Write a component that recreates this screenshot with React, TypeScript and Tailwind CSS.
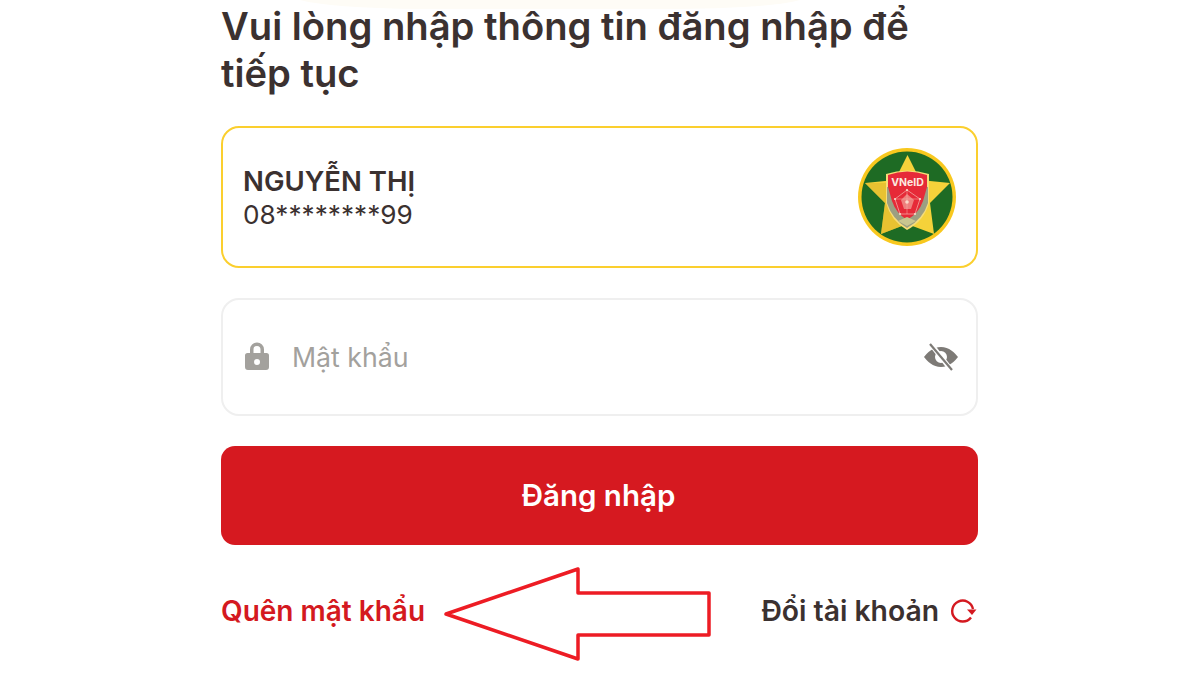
import React from "react";

const Emblem = () => (
  <svg width="100" height="100" viewBox="0 0 100 100" className="shrink-0">
    <circle cx="50" cy="50" r="49" fill="#f8c81e" />
    <circle cx="50" cy="50" r="45.500" fill="#1e6b24" />
    <path d="M50.500 8 L63 33 L93 36 L73 56 L77 87 L50 77 L24 87 L28 56 L8 36 L38 33 Z" fill="#f5d23a" />
    <path d="M8 36 L28 56 L24 87 L50 77 L50 60 L30 36 Z" fill="#dcb52a" opacity="0.55" />
    <path d="M29 27 Q50 20 72 27 L72 56 Q67 74 50 83 Q34 74 29 56 Z" fill="#f7dd78" />
    <path d="M30 40 L71 40 L71 56 Q66 72 50 81 Q35 72 30 56 Z" fill="#9c9f82" />
    <path d="M31 28 Q50 21 70 28 L70 40 L66 54 Q62 66 50 73 Q39 66 35 54 L31 40 Z" fill="#e62a38" />
    <path d="M50 43 L63 52 L58 67 L43 67 L38 52 Z" fill="none" stroke="#f5b5ad" strokeWidth="0.700" />
    <path d="M50 47 L57 53 L54 62 L47 62 L44 53 Z" fill="#ee7f7c" />
    <path d="M50 43 L50 67 M38 52 L63 52" stroke="#f5b5ad" strokeWidth="0.500" />
    <circle cx="50" cy="55" r="1.800" fill="#fbd9c8" />
    <circle cx="38" cy="52" r="1.100" fill="#fbd9c8" />
    <circle cx="63" cy="52" r="1.100" fill="#fbd9c8" />
    <circle cx="50" cy="43" r="1.100" fill="#fbd9c8" />
    <circle cx="43" cy="67" r="1.100" fill="#fbd9c8" />
    <circle cx="58" cy="67" r="1.100" fill="#fbd9c8" />
    <path d="M41 74 L50 70 L59 74 L50 79 Z" fill="#c9c690" />
    <text x="50.500" y="39" textAnchor="middle" fontSize="10.500" fontWeight="700" fill="#fbe9e0" fontFamily="Inter, sans-serif">VNeID</text>
  </svg>
);

const Lock = () => (
  <svg width="28" height="32" viewBox="0 0 28 32" className="shrink-0">
    <path
      fillRule="evenodd"
      fill="#a3a19d"
      d="M7 12V8.500a7 7 0 0 1 14 0V12h2A2.500 2.500 0 0 1 26 14.500V26a3 3 0 0 1-3 3H5a3 3 0 0 1-3-3V14.500A2.500 2.500 0 0 1 4.500 12H7Zm3.500 0h7V8.500a3.500 3.500 0 0 0-7 0V12Zm3.500 6a3 3 0 1 0 0 6 3 3 0 0 0 0-6Z"
    />
  </svg>
);

const EyeOff = () => (
  <svg width="36" height="28" viewBox="0 0 36 28" className="shrink-0">
    <path
      fillRule="evenodd"
      fill="#7d7a76"
      d="M18 4C10 4 4 10 1 14c3 4 9 10 17 10s14-6 17-10c-3-4-9-10-17-10Zm0 4a6 6 0 1 1 0 12 6 6 0 0 1 0-12Z"
    />
    <path d="M7 0 L29 28" stroke="#ffffff" strokeWidth="5" />
    <path d="M7 1 L29 27" stroke="#7d7a76" strokeWidth="2.200" />
  </svg>
);

const Refresh = () => (
  <svg width="28" height="28" viewBox="0 0 28 28" className="shrink-0">
    <path d="M24 12 A10.500 10.500 0 1 0 22 20.500" fill="none" stroke="#d41920" strokeWidth="2.400" />
    <path d="M18 12.500 L27.500 12.500 L23 18 Z" fill="#d41920" />
  </svg>
);

export default function App() {
  return (
    <div className="relative h-[675px] w-[1200px] overflow-hidden bg-white font-['Inter',sans-serif]">
      {/* faint watermark behind the title */}
      <svg width="500" height="12" viewBox="0 0 500 12" className="absolute top-0 left-[300px]">
        <path d="M0 0 L500 0 Q470 8 380 9 L120 9 Q30 8 0 0 Z" fill="#fefcf6" />
      </svg>

      <div className="relative flex flex-col pt-[3px] pr-[222px] pl-[221px]">
        <h1 className="text-[38.200px] leading-[47px] font-semibold text-[#3b3130]">
          Vui lòng nhập thông tin đăng nhập để tiếp tục
        </h1>

        <div className="mt-[29px] flex h-[142px] items-center justify-between rounded-[18px] border-2 border-[#fbcf2e] pr-[19px] pl-[20px]">
          <div className="flex flex-col text-[#3b3130]">
            <span className="mt-[2px] text-[27.500px] leading-[34px] font-semibold">NGUYỄN THỊ</span>
            <span className="text-[26.200px] leading-[34px]">08********99</span>
          </div>
          <Emblem />
        </div>

        <div className="mt-[30px] flex h-[118px] items-center rounded-[18px] border-2 border-[#efefef] pr-[17px] pl-[20px]">
          <Lock />
          <span className="ml-[21px] text-[26.700px] text-[#a3a19d]">Mật khẩu</span>
          <span className="ml-auto flex">
            <EyeOff />
          </span>
        </div>

        <button className="mt-[30px] flex h-[99px] items-center justify-center rounded-[14px] bg-[#d61920] pr-[2px] text-[29.500px] font-semibold text-white">
          Đăng nhập
        </button>

        <div className="mt-[45px] flex items-center justify-between">
          <span className="text-[28px] font-semibold text-[#d41920]">Quên mật khẩu</span>
          <span className="flex items-center gap-[10px] pr-[1px] text-[28.300px] font-semibold text-[#3b3130]">
            Đổi tài khoản
            <Refresh />
          </span>
        </div>
      </div>

      <svg width="1200" height="675" viewBox="0 0 1200 675" className="pointer-events-none absolute top-0 left-0">
        <path
          d="M446 614 L578 569 L578 593 L709 593 L709 635 L578 635 L578 659 Z"
          fill="none"
          stroke="#ed1c24"
          strokeWidth="3.500"
          strokeLinejoin="round"
        />
      </svg>
    </div>
  );
}
